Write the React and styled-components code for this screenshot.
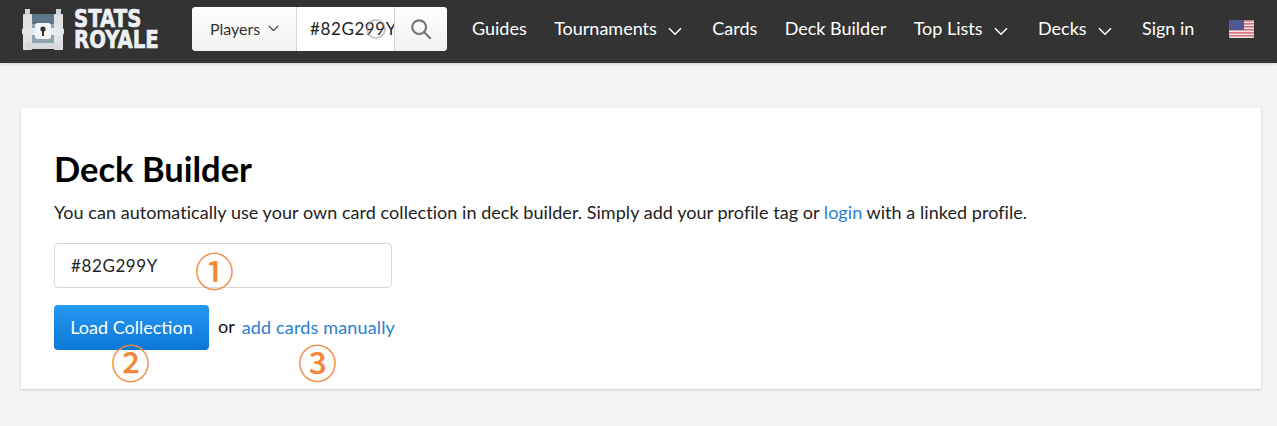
import React from "react";
import styled, { createGlobalStyle } from "styled-components";

const GlobalStyle = createGlobalStyle`
  html, body {
    margin: 0;
    padding: 0;
    background: #f4f4f4;
    font-family: "Lato", "Liberation Sans", sans-serif;
    color: #111;
  }
`;

const Page = styled.div`
  position: relative;
  height: 426px;
  overflow: hidden;
`;

const Header = styled.header`
  display: flex;
  align-items: center;
  height: 63px;
  padding: 0 0 5px 21px;
  box-sizing: border-box;
  background: #333;
  box-shadow: 0 1px 3px rgba(0, 0, 0, 0.15);
`;

const Logo = styled.div`
  display: flex;
  align-items: center;
  gap: 9px;
  width: 171px;
`;

const LogoText = styled.div`
  margin-top: 2px;
  font-family: "DejaVu Sans", sans-serif;
  font-weight: 700;
  font-size: 24px;
  line-height: 21px;
  color: #eef0f3;
  -webkit-text-stroke: 0.7px #eef0f3;
  transform: scaleX(0.82);
  transform-origin: left center;
  white-space: nowrap;
`;

const Search = styled.div`
  position: relative;
  display: flex;
  width: 255px;
  height: 44px;
  border-radius: 4px;
  overflow: hidden;
  background: #fff;
`;

const SearchSelect = styled.div`
  display: flex;
  align-items: center;
  gap: 8px;
  width: 105px;
  padding: 0 0 2px 18px;
  box-sizing: border-box;
  font-size: 16px;
  color: #333;
  background: linear-gradient(#fff, #f1f1f1);
  border-right: 1px solid #d5d5d5;
`;

const SearchValue = styled.div`
  display: flex;
  align-items: center;
  width: 97px;
  padding: 0 0 2px 13px;
  box-sizing: border-box;
  font-size: 17px;
  letter-spacing: 0.6px;
  color: #222;
  white-space: nowrap;
  overflow: hidden;
`;

const SearchButton = styled.div`
  display: flex;
  align-items: center;
  justify-content: center;
  flex: 1;
  background: linear-gradient(#fff, #f1f1f1);
  border-left: 1px solid #d5d5d5;
`;

const TouchMark = styled.span`
  position: absolute;
  left: 174px;
  top: 12px;
  width: 20px;
  height: 20px;
  box-sizing: border-box;
  border: 2px solid rgba(150, 150, 150, 0.55);
  border-radius: 50%;
`;

const Nav = styled.nav`
  display: flex;
  align-items: center;
  gap: 27.4px;
  margin-left: 25px;
  padding-bottom: 2px;
`;

const NavItem = styled.a`
  display: flex;
  align-items: center;
  gap: 11px;
  font-size: 18px;
  color: #fff;
  white-space: nowrap;
`;

const NavChevron = styled.span`
  display: flex;
  margin: 6px 3px 0 0;
`;

const Flag = styled.svg`
  display: block;
  margin: 2px 0 0 7px;
`;

const Card = styled.main`
  margin: 45px 16px 0 21px;
  height: 281px;
  padding: 41px 33px 0;
  box-sizing: border-box;
  background: #fff;
  box-shadow: 0 1px 2px rgba(0, 0, 0, 0.18);
`;

const Title = styled.h1`
  margin: 0;
  font-size: 34.5px;
  line-height: 40px;
  font-weight: 700;
  color: #000;
`;

const Intro = styled.p`
  margin: 11px 0 0;
  font-size: 18px;
  line-height: 24px;
  letter-spacing: 0.05px;
  color: #222;
  white-space: nowrap;
`;

const Link = styled.a`
  color: #2a80cf;
`;

const TagInput = styled.div`
  display: flex;
  align-items: center;
  width: 338px;
  height: 45px;
  margin-top: 19px;
  padding-left: 16px;
  box-sizing: border-box;
  border: 1px solid #d8d8d8;
  border-radius: 4px;
  font-size: 17px;
  letter-spacing: 0.6px;
  color: #222;
`;

const Actions = styled.div`
  display: flex;
  align-items: center;
  margin-top: 17px;
  font-size: 18px;
`;

const LoadButton = styled.div`
  display: flex;
  align-items: center;
  justify-content: center;
  width: 155px;
  height: 45px;
  padding-bottom: 2px;
  box-sizing: border-box;
  margin-right: 9px;
  border-radius: 4px;
  background: linear-gradient(#2499f2, #0d77d6);
  color: #fff;
  font-size: 18px;
`;

const Or = styled.span`
  margin-right: 7px;
  padding-bottom: 3px;
  color: #111;
`;

const ManualLink = styled(Link)`
  padding-bottom: 2px;
  letter-spacing: 0.15px;
`;

const Marker = styled.span`
  position: absolute;
  left: ${(p) => p.$x}px;
  top: ${(p) => p.$y}px;
  font-family: "Noto Sans CJK JP", sans-serif;
  font-size: 39px;
  font-weight: 500;
  line-height: 39px;
  color: #f5873a;
`;

const Chevron = ({ size = 14 }) => (
  <svg width={size} height={size * 0.6} viewBox="0 0 14 8" fill="none" stroke="currentColor" strokeWidth="1.5">
    <path d="M1 1l6 6 6-6" />
  </svg>
);

const Chest = () => (
  <svg width="44" height="44" viewBox="0 0 44 44">
    <rect x="6" y="7" width="32" height="31" fill="#8fa5b3" />
    <rect x="6" y="7" width="32" height="10" fill="#5f7889" />
    <rect x="2" y="7" width="9" height="36" rx="1" fill="#dfe3e6" />
    <rect x="33" y="7" width="9" height="36" rx="1" fill="#dfe3e6" />
    <rect x="4" y="2" width="5" height="6" fill="#cfd4d8" />
    <rect x="35" y="2" width="5" height="6" fill="#cfd4d8" />
    <rect x="1" y="21" width="42" height="7" rx="2" fill="#e6e9eb" />
    <rect x="4" y="36" width="36" height="6" rx="1" fill="#d5d9dc" />
    <rect x="14" y="16" width="16" height="16" rx="3" fill="#f2f4f5" />
    <circle cx="22" cy="22" r="2.6" fill="#333" />
    <rect x="21" y="23" width="2" height="6" fill="#333" />
  </svg>
);

const UsFlag = () => (
  <Flag width="25" height="18" viewBox="0 0 25 18">
    <rect width="25" height="18" rx="1.5" fill="#f0e4e4" />
    {[0, 3, 6, 9, 12, 15].map((y) => (
      <rect key={y} y={y} width="25" height="1.6" fill="#d8747c" />
    ))}
    <rect width="15" height="10" fill="#4d5a96" />
  </Flag>
);

const SearchIcon = () => (
  <svg width="22" height="22" viewBox="0 0 24 24" fill="none" stroke="#777" strokeWidth="2.4" strokeLinecap="round">
    <circle cx="10" cy="10" r="7.5" />
    <path d="M15.5 15.5L22 22" />
  </svg>
);

export default function App() {
  return (
    <Page>
      <GlobalStyle />
      <Header>
        <Logo>
          <Chest />
          <LogoText>
            STATS
            <br />
            ROYALE
          </LogoText>
        </Logo>
        <Search>
          <SearchSelect>
            Players <Chevron size={11} />
          </SearchSelect>
          <SearchValue>#82G299Y</SearchValue>
          <SearchButton>
            <SearchIcon />
          </SearchButton>
          <TouchMark />
        </Search>
        <Nav>
          <NavItem>Guides</NavItem>
          <NavItem>
            Tournaments <NavChevron><Chevron /></NavChevron>
          </NavItem>
          <NavItem>Cards</NavItem>
          <NavItem>Deck Builder</NavItem>
          <NavItem>
            Top Lists <NavChevron><Chevron /></NavChevron>
          </NavItem>
          <NavItem>
            Decks <NavChevron><Chevron /></NavChevron>
          </NavItem>
          <NavItem>Sign in</NavItem>
          <UsFlag />
        </Nav>
      </Header>
      <Card>
        <Title>Deck Builder</Title>
        <Intro>
          You can automatically use your own card collection in deck builder. Simply add your profile tag or{" "}
          <Link>login</Link> with a linked profile.
        </Intro>
        <TagInput>#82G299Y</TagInput>
        <Actions>
          <LoadButton>Load Collection</LoadButton>
          <Or>or</Or>
          <ManualLink>add cards manually</ManualLink>
        </Actions>
      </Card>
      <Marker $x={195} $y={250}>①</Marker>
      <Marker $x={111} $y={342}>②</Marker>
      <Marker $x={298} $y={342}>③</Marker>
    </Page>
  );
}
